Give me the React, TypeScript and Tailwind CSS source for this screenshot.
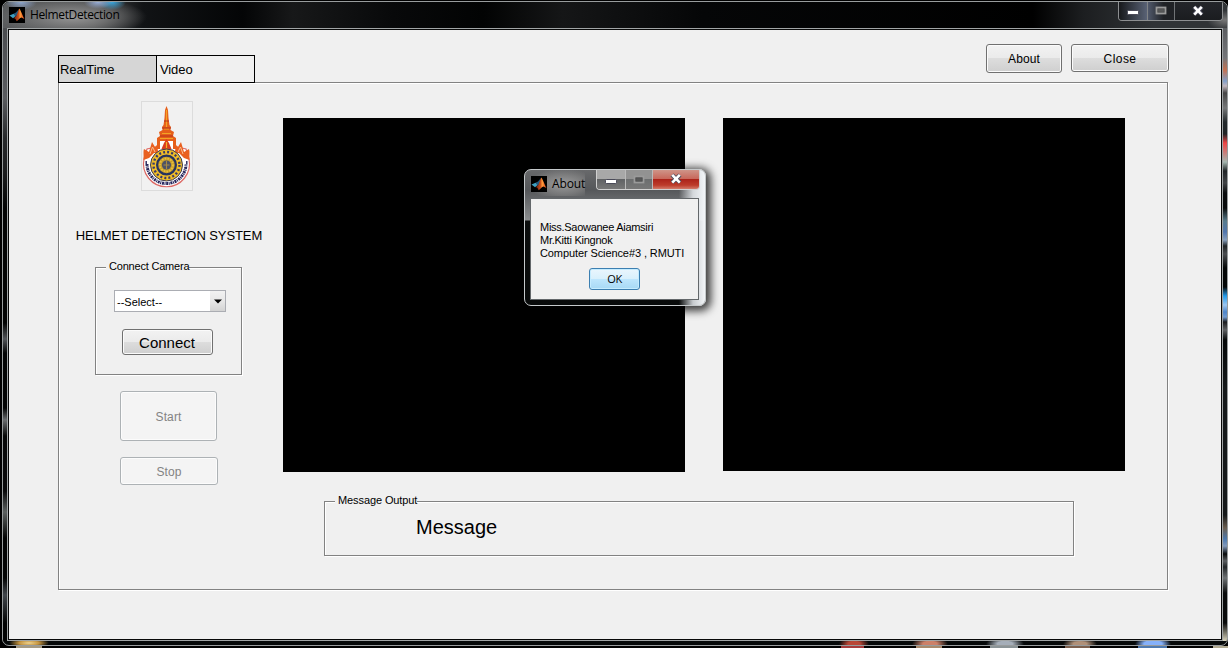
import React from 'react';

function MatlabIcon() {
  return (
    <svg width="16" height="16" viewBox="0 0 16 16" className="block shrink-0">
      <defs>
        <linearGradient id="flame" x1="0" x2="1" y1="0" y2="0">
          <stop offset="0" stopColor="#6b1a10" />
          <stop offset="0.45" stopColor="#c8501b" />
          <stop offset="0.62" stopColor="#ff9a3a" />
          <stop offset="1" stopColor="#d8401a" />
        </linearGradient>
      </defs>
      <rect width="16" height="16" fill="#000" />
      <path d="M0.5 8.6 L4.6 6.8 L7 8.8 L4 11.3 Z" fill="#3f9fc0" />
      <path d="M4.6 6.8 L7 5.6 L10 2 L8.6 8 L6.4 9.6 Z" fill="#235a80" />
      <path d="M4.6 11.2 L7.4 8.8 C8.6 6.5 9.2 3.4 10.4 1.6 C11.8 3.4 13.4 8.6 15.4 12 L12.4 10.4 C10.8 10.6 9.6 13 7.6 14.2 C7 12.4 6.2 11 4.6 11.2 Z" fill="url(#flame)" />
    </svg>
  );
}

function Emblem() {
  return (
    <svg width="52" height="90" viewBox="0 0 52 90" className="block">
      <rect x="0.5" y="0.5" width="51" height="89" fill="#f1f1f1" stroke="#dcdcdc" />
      <path d="M3 58 A23 23 0 1 0 48 58 L45 48 L36 46 H15 L6 48 Z" fill="#fff" stroke="#dd6a66" strokeWidth="1.2" />
      <path d="M25.5 5 L27 9 L27.5 17 L28.5 24 L30 26 L29.5 29 L33 31 L32 35 L35 37 L35 48 H16 L16 37 L19 35 L18 31 L21.5 29 L21 26 L22.5 24 L23.5 17 L24 9 Z" fill="#e65f1a" />
      <path d="M25.5 9 V26 M23 28 H28 M21 32.5 H30 M19 37.5 H32" stroke="#f3a425" strokeWidth="1.2" />
      <path d="M23 20 H28 M21 27 H30 M19 35 H32" stroke="#a8251d" strokeWidth="0.8" />
      <path d="M19 40 H32 V48 H19 Z" fill="#fff" />
      <path d="M25.5 38 L28 42 L30.5 48 H20.5 L23 42 Z" fill="#d93e20" />
      <path d="M25.5 41 V48" stroke="#f3b425" strokeWidth="1.2" />
      <path d="M2.5 59 C3 53 2 51 3 48 L8 51 L11 41 L14 46 L16 44 L17 50 L20 49 L25.5 47 L31 49 L34 50 L35 44 L37 46 L40 41 L43 51 L48 48 C49 51 48 54 48.5 59 L43 57 L38 52 L13 52 L8 57 Z" fill="#e96020" />
      <path d="M9 53 L11.5 46 L14 51 M42 53 L39.5 46 L37 51" fill="none" stroke="#f7bd90" strokeWidth="1" />
      <circle cx="25.5" cy="64" r="16" fill="#f0bd28" stroke="#3b3a54" strokeWidth="1" />
      <circle cx="25.5" cy="64" r="13" fill="none" stroke="#3a3a68" strokeWidth="2.4" strokeDasharray="2 2.1" />
      <circle cx="25.5" cy="64" r="9.4" fill="#c79d2c" stroke="#26335f" strokeWidth="2.2" />
      <circle cx="25.5" cy="64" r="6.5" fill="none" stroke="#e9c13c" strokeWidth="1.8" strokeDasharray="1.6 1.2" />
      <circle cx="25.5" cy="64" r="4.6" fill="#4c5266" />
      <path d="M25.5 60 V68 M22.5 64 H28.5" stroke="#a78945" strokeWidth="1.1" />
      <path d="M6 63 A19.5 19.5 0 1 0 45 63" fill="none" stroke="#26265c" strokeWidth="3" strokeDasharray="2 0.6 1 0.7" />
      <path d="M5.2 60 V63 M45.8 60 V63" stroke="#26265c" strokeWidth="1.4" />
    </svg>
  );
}

function CaptionGlyph({ kind }: { kind: 'min' | 'max' | 'close' }) {
  if (kind === 'min')
    return (
      <svg width="14" height="10" viewBox="0 0 14 10" className="block">
        <rect x="1.5" y="4.5" width="11" height="4" rx="0.8" fill="#fff" stroke="#4a4a58" strokeWidth="1" />
      </svg>
    );
  if (kind === 'max')
    return (
      <svg width="14" height="10" viewBox="0 0 14 10" className="block">
        <rect x="2.5" y="1.5" width="9" height="6" fill="#58595a" stroke="#9a9a9a" strokeWidth="1.8" />
        <rect x="4" y="3" width="6" height="3" fill="none" stroke="#505050" strokeWidth="0.7" />
      </svg>
    );
  return (
    <svg width="14" height="12" viewBox="0 0 14 12" className="block">
      <path d="M3 2 L11 9.5 M11 2 L3 9.5" stroke="#4c4c5c" strokeWidth="4.4" />
      <path d="M3.2 1.8 L10.8 9.7 M10.8 1.8 L3.2 9.7" stroke="#fff" strokeWidth="2.6" />
    </svg>
  );
}

function Button({ className = '', children }: { className?: string; children: React.ReactNode }) {
  return (
    <button
      className={
        'flex items-center justify-center whitespace-nowrap rounded-[3px] border border-[#707070] bg-[linear-gradient(#f2f2f2_0%,#ebebeb_48%,#dddddd_50%,#cfcfcf_100%)] text-black shadow-[inset_0_0_0_1px_#fbfbfb] ' +
        className
      }
    >
      {children}
    </button>
  );
}

function DisabledButton({ className = '', children }: { className?: string; children: React.ReactNode }) {
  return (
    <button
      disabled
      className={
        'flex items-center justify-center rounded-[3px] border border-[#adb2b5] bg-[#f4f4f4] pt-[2px] text-[12px] tracking-[0.1px] text-[#838383] shadow-[inset_0_0_0_1px_#fcfcfc] ' +
        className
      }
    >
      {children}
    </button>
  );
}

const etched = 'border border-[#828282] shadow-[1px_1px_0_#fff,inset_1px_1px_0_#fff] ';

function AboutDialog() {
  return (
    <div className="absolute left-[524px] top-[169px] flex h-[137px] w-[182px] flex-col rounded-[7px] border border-[#c5c9cb] bg-[linear-gradient(90deg,transparent_0_154px,#e9edf1d9_168px,#f3f6f9_180px),linear-gradient(#68696b_0,#55575a_20px,#8a8c8e_50px,#0b0d0d_51px,#080a0a_100%)] px-[5px] shadow-[2px_2px_9px_3px_rgba(0,0,0,0.75)]">
      <div className="flex h-[28px] shrink-0 justify-between">
        <div className="flex h-[26px] items-center gap-[5px] bg-[radial-gradient(ellipse_at_60%_55%,#a8a8a8e0_0%,#8888889c_50%,transparent_76%)] pl-px pt-[2px]">
          <MatlabIcon />
          <span className="font-['Open_Sans',sans-serif] text-[12px] leading-4 tracking-[-0.1px] text-black">About</span>
        </div>
        <div className="flex h-[20px] w-[104px] overflow-hidden rounded-b-[4px] border border-t-0 border-[#d0d0d0]">
          <div className="flex w-[29px] items-center justify-center border-r border-[#bababa] bg-[linear-gradient(#a8a8a8_0_45%,#606264_50%,#777_100%)]"><CaptionGlyph kind="min" /></div>
          <div className="flex w-[27px] items-center justify-center border-r border-[#bababa] bg-[linear-gradient(#929292_0_45%,#6c6e6f_50%,#777_100%)]"><CaptionGlyph kind="max" /></div>
          <div className="flex flex-1 items-center justify-center bg-[linear-gradient(#cf9488_0%,#c8695c_45%,#ac241a_50%,#bd3c2b_80%,#d37b6a_100%)] pb-[2px]"><CaptionGlyph kind="close" /></div>
        </div>
      </div>
      <div className="flex h-[102px] w-[169px] flex-col border border-[#63676a] bg-[#f0f0f0] pl-[9px] pt-[22px]">
        <div className="whitespace-nowrap text-[11px] leading-[13px] text-black">
          <p className="tracking-[-0.28px]">Miss.Saowanee Aiamsiri</p>
          <p className="tracking-[-0.25px]">Mr.Kitti Kingnok</p>
          <p className="tracking-[-0.1px]">Computer Science#3 , RMUTI</p>
        </div>
        <button className="ml-[49px] mt-[8px] flex h-[22px] w-[51px] items-center justify-center rounded-[3px] border border-[#3c7fb1] bg-[linear-gradient(#eaf6fd_0%,#d9f0fc_48%,#bee6fd_50%,#a7d9f5_100%)] font-['Open_Sans',sans-serif] text-[11px] tracking-[-0.3px] text-black shadow-[inset_0_0_0_1px_#c5ecff]">
          OK
        </button>
      </div>
    </div>
  );
}

export default function App() {
  return (
    <div className="relative h-[648px] w-[1228px] overflow-hidden bg-[linear-gradient(90deg,transparent_0_16px,#a59a82_16px_42px,transparent_42px_841px,#a63b3b_841px_864px,transparent_864px_916px,#a88a6c_916px_942px,transparent_942px_990px,#8b9497_990px_1018px,transparent_1018px_1065px,#7c604e_1065px_1090px,transparent_1090px_1138px,#507ab0_1138px_1167px,transparent_1167px_1213px,#b1aa91_1213px)] bg-[length:100%_2px] bg-bottom bg-no-repeat pl-[2px] pt-px font-['Liberation_Sans',Arial,sans-serif] [background-color:#000]">
      <div className="flex h-[645px] w-[1226px] flex-col overflow-hidden rounded-[7px] border border-[#989c9d] bg-[radial-gradient(ellipse_20px_5px_at_26px_641px,#efd593_0%,#c4943f_50%,transparent_100%),radial-gradient(ellipse_15px_7px_at_851px_642px,#b94736_0_40%,transparent_100%),radial-gradient(ellipse_18px_7px_at_927px_642px,#cc8068_0_40%,transparent_100%),radial-gradient(ellipse_19px_7px_at_1002px_642px,#a5aeb9_0_40%,transparent_100%),radial-gradient(ellipse_17px_6px_at_1077px_642px,#b09078_0_40%,transparent_100%),radial-gradient(ellipse_18px_7px_at_1150px_642px,#86b1fa_0_50%,transparent_100%),linear-gradient(#060909,#060909)]">
        <div className="flex h-[26px] shrink-0 justify-between bg-[radial-gradient(ellipse_16px_8px_at_18px_0,#8fa8d0_0,transparent_100%),radial-gradient(ellipse_14px_7px_at_95px_0,#9ab0da_0,transparent_100%),radial-gradient(ellipse_14px_8px_at_109px_0,#39a8e0_0,transparent_100%),radial-gradient(ellipse_74px_20px_at_70px_15px,#969696_0%,#838383b0_50%,transparent_100%),radial-gradient(ellipse_20px_12px_at_1185px_0,#819bc480_0,transparent_100%),radial-gradient(ellipse_18px_10px_at_1222px_18px,#777_0,transparent_100%),linear-gradient(90deg,#5a5c5e_0,#454749_90px,#111315_140px,#040506_240px,#171819_290px,#08090a_390px,#020303_480px,#151617_560px,#050607_700px,#000_1030px,#1c1e20_1080px,#303336_1150px,#303336)]">
          <div className="flex items-center gap-[5px] pl-[6px]">
            <MatlabIcon />
            <span className="font-['Open_Sans',sans-serif] text-[12px] leading-4 tracking-[-0.36px] text-black">HelmetDetection</span>
          </div>
          <div className="mr-[4px] flex h-[19px] w-[105px] overflow-hidden rounded-b-[4px] border border-t-0 border-[#8d8f91] shadow-[inset_0_0_0_1px_#303236]">
            <div className="flex w-[29px] items-center justify-center border-r border-[#808386] bg-[linear-gradient(90deg,#17191c,#596275)]"><CaptionGlyph kind="min" /></div>
            <div className="flex w-[27px] items-center justify-center border-r border-[#707376] bg-[linear-gradient(90deg,#50586a,#202226_60%)] pb-px"><CaptionGlyph kind="max" /></div>
            <div className="flex flex-1 items-center justify-center bg-[linear-gradient(#24262a,#1b1d20)] pb-px pr-[2px]"><CaptionGlyph kind="close" /></div>
          </div>
        </div>
        <div className="flex h-[613px] shrink-0">
          <div className="w-[4px] bg-[linear-gradient(#4b4d50_0,#5b5d60_70px,#27292b_110px,#1b1c1d_145px,#020303_180px,#020303_295px,#53565a_311px,#030404_325px,#020303_380px,#6b6e70_392px,#070808_408px,#09090a_463px,#5d6261_484px,#020303_510px,#020303_550px,#42474c_567px,#020303_595px)]" />
          <div className="w-[1216px] border border-[#a1a5a6]">
            <main className="h-[611px] w-[1214px] border border-[#070808] bg-[#f0f0f0]">
              <header className="flex h-[52px] items-start justify-between pl-[49px] pr-[52px]">
                <nav className="mt-[25px] flex h-[28px] w-[197px] border border-black text-[13px] text-black">
                  <div className="flex w-[98px] items-center border-r border-black bg-[#d6d6d6] pl-px pt-[2px] tracking-[-0.1px]">RealTime</div>
                  <div className="flex flex-1 items-center pl-[3px] pt-[2px] tracking-[-0.1px]">Video</div>
                </nav>
                <div className="mt-[14px] flex gap-[9px] text-[12px] tracking-[0.1px]">
                  <Button className="h-[29px] w-[76px]">About</Button>
                  <Button className="h-[28px] w-[98px] pt-px tracking-[0.45px]">Close</Button>
                </div>
              </header>
              <section className="ml-[49px] h-[508px] w-[1110px]">
                <div className={etched + 'flex h-full w-full [clip-path:polygon(197px_0,1111px_0,1111px_509px,0_509px,0_1px,197px_1px)]'}>
                  <aside className="flex w-[224px] flex-col items-center">
                    <div className="mr-[8px] mt-[18px]"><Emblem /></div>
                    <h1 className="mr-[4px] mt-[37px] whitespace-nowrap text-[13px] leading-4 tracking-[-0.08px] text-black">HELMET DETECTION SYSTEM</h1>
                    <fieldset className={etched + 'relative mr-[5px] mt-[23px] flex h-[108px] w-[147px] shrink-0 flex-col items-center'}>
                      <span className="absolute left-[10px] top-[-9px] whitespace-nowrap bg-[#f0f0f0] pl-[3px] text-[11px] leading-[14px] tracking-[-0.2px] text-black">Connect Camera</span>
                      <div className="ml-[3px] mt-[22px] flex h-[22px] w-[112px] shrink-0 items-center justify-between border border-[#abadb3] bg-white pl-[2px] text-[11px] text-black">
                        <span className="pt-[2px]">--Select--</span>
                        <span className="flex h-full w-[15px] items-center justify-center bg-[linear-gradient(#f2f2f2,#e7e7e7_50%,#d3d3d3)]">
                          <svg width="8" height="5" viewBox="0 0 8 5"><path d="M0 0.5 H8 L4 4.5 Z" fill="#000" /></svg>
                        </span>
                      </div>
                      <Button className="mr-[3px] mt-[17px] h-[26px] w-[91px] pt-[2px] text-[15px]">Connect</Button>
                    </fieldset>
                    <DisabledButton className="mr-[5px] mt-[16px] h-[50px] w-[97px] shrink-0">Start</DisabledButton>
                    <DisabledButton className="mr-[4px] mt-[16px] h-[28px] w-[98px] shrink-0">Stop</DisabledButton>
                  </aside>
                  <div className="flex flex-col pt-[35px]">
                    <div className="flex gap-[38px]">
                      <div className="h-[354px] w-[402px] bg-black" />
                      <div className="h-[353px] w-[402px] bg-black" />
                    </div>
                    <fieldset className={etched + 'relative ml-[41px] mt-[29px] h-[55px] w-[750px]'}>
                      <span className="absolute left-[10px] top-[-9px] whitespace-nowrap bg-[#f0f0f0] pl-[3px] text-[11px] leading-[14px] tracking-[-0.1px] text-black">Message Output</span>
                      <p className="pl-[91px] pt-[13px] text-[20px] leading-6 text-black">Message</p>
                    </fieldset>
                  </div>
                </div>
              </section>
            </main>
          </div>
          <div className="w-[4px] bg-[linear-gradient(#5b5d60_0,#747679_30px,#c47252_42px,#819fc8_53px,#c0b5bd_58px,#464646_65px,#767879_80px,#23292b_94px,#202426_106px,#ee4545_115px,#a5b7b0_134px,#202426_143px,#414446_155px,#0a0c0d_165px,#080a0a_180px,#597c8c_193px,#5277ae_204px,#88a0bd_212px,#202426_218px,#4a4d50_226px,#030606_240px,#030606_259px,#249ceb_268px,#9dc6ef_277px,#4f86c9_284px,#719bd0_289px,#1b1c1e_294px,#606264_302px,#040707_312px,#15191a_360px,#15191a_487px,#6a5e50_500px,#4c79ad_511px,#8299ba_518px,#080a0a_526px,#5b5e61_533px,#222628_539px,#6f7375_550px,#090b0b_565px,#090b0b_595px,#d8d4bd_613px)]" />
        </div>
      </div>
      <AboutDialog />
    </div>
  );
}
